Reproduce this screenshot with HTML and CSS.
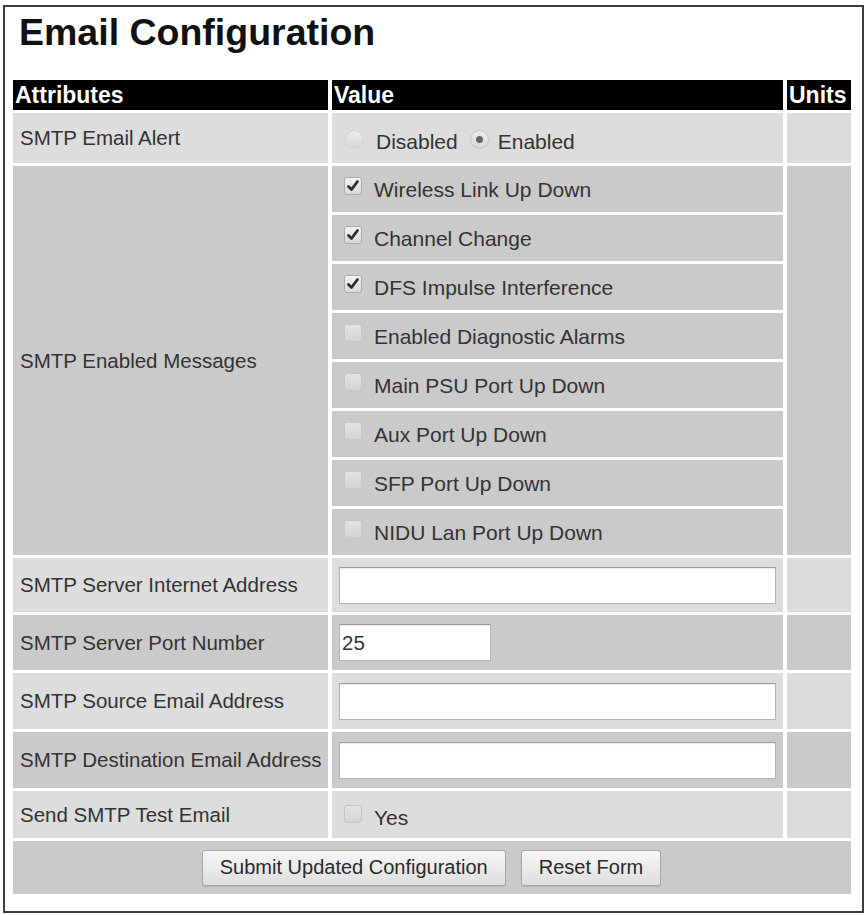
FILE: index.html
```html
<!DOCTYPE html>
<html>
<head>
<meta charset="utf-8">
<title>Email Configuration</title>
<link rel="stylesheet" href="styles.css">
</head>
<body>
<div class="frame">
  <h1 class="title">Email Configuration</h1>
  <table class="config">
    <colgroup><col class="c-attr"><col class="c-val"><col class="c-unit"></colgroup>
    <thead>
      <tr class="head"><th>Attributes</th><th>Value</th><th>Units</th></tr>
    </thead>
    <tbody>
      <tr class="light r-alert">
        <td class="attr">SMTP Email Alert</td>
        <td class="val">
          <div class="opts">
            <span class="rb"></span><span class="lbl">Disabled</span>
            <span class="rb on"></span><span class="lbl">Enabled</span>
          </div>
        </td>
        <td class="unit"></td>
      </tr>
      <tr class="dark sub">
        <td class="attr" rowspan="8">SMTP Enabled Messages</td>
        <td class="val"><div class="chk"><span class="cb on"><svg viewBox="0 0 16 16"><path d="M3.5 8.5 L6.5 11.5 L12.5 3.5"/></svg></span><span class="lbl">Wireless Link Up Down</span></div></td>
        <td class="unit" rowspan="8"></td>
      </tr>
      <tr class="dark sub"><td class="val"><div class="chk"><span class="cb on"><svg viewBox="0 0 16 16"><path d="M3.5 8.5 L6.5 11.5 L12.5 3.5"/></svg></span><span class="lbl">Channel Change</span></div></td></tr>
      <tr class="dark sub"><td class="val"><div class="chk"><span class="cb on"><svg viewBox="0 0 16 16"><path d="M3.5 8.5 L6.5 11.5 L12.5 3.5"/></svg></span><span class="lbl">DFS Impulse Interference</span></div></td></tr>
      <tr class="dark sub"><td class="val"><div class="chk"><span class="cb"></span><span class="lbl">Enabled Diagnostic Alarms</span></div></td></tr>
      <tr class="dark sub"><td class="val"><div class="chk"><span class="cb"></span><span class="lbl">Main PSU Port Up Down</span></div></td></tr>
      <tr class="dark sub"><td class="val"><div class="chk"><span class="cb"></span><span class="lbl">Aux Port Up Down</span></div></td></tr>
      <tr class="dark sub"><td class="val"><div class="chk"><span class="cb"></span><span class="lbl">SFP Port Up Down</span></div></td></tr>
      <tr class="dark sub"><td class="val"><div class="chk"><span class="cb"></span><span class="lbl">NIDU Lan Port Up Down</span></div></td></tr>
      <tr class="light r-addr">
        <td class="attr">SMTP Server Internet Address</td>
        <td class="val"><input class="field wide" type="text" value=""></td>
        <td class="unit"></td>
      </tr>
      <tr class="dark r-port">
        <td class="attr">SMTP Server Port Number</td>
        <td class="val"><input class="field short" type="text" value="25"></td>
        <td class="unit"></td>
      </tr>
      <tr class="light r-src">
        <td class="attr">SMTP Source Email Address</td>
        <td class="val"><input class="field wide" type="text" value=""></td>
        <td class="unit"></td>
      </tr>
      <tr class="dark r-dst">
        <td class="attr">SMTP Destination Email Address</td>
        <td class="val"><input class="field wide" type="text" value=""></td>
        <td class="unit"></td>
      </tr>
      <tr class="light r-test">
        <td class="attr">Send SMTP Test Email</td>
        <td class="val"><div class="chk test"><span class="cb"></span><span class="lbl">Yes</span></div></td>
        <td class="unit"></td>
      </tr>
      <tr class="dark r-btn">
        <td class="btns" colspan="3">
          <div class="btnrow">
            <button class="btn" type="button">Submit Updated Configuration</button>
            <button class="btn" type="button">Reset Form</button>
          </div>
        </td>
      </tr>
    </tbody>
  </table>
</div>
</body>
</html>
```
FILE: styles.css
```css
html, body {
  margin: 0;
  padding: 0;
  background: #ffffff;
}
body {
  font-family: "Liberation Sans", Arial, sans-serif;
  color: #333333;
}
.frame {
  margin: 5px 3px 0 3px;
  box-sizing: border-box;
  width: 861px;
  height: 908px;
  border: 2px solid #3c3c3c;
  padding: 0 0 0 4px;
}
.title {
  margin: 3px 0 23px 10px;
  font-size: 37.5px;
  line-height: 44px;
  font-weight: bold;
  color: #111111;
}
.config {
  border-collapse: separate;
  border-spacing: 4px 3px;
  table-layout: fixed;
  width: 846px;
}
.c-attr { width: 315px; }
.c-val { width: 451px; }
.c-unit { width: 64px; }
.head th {
  background: #000000;
  color: #ffffff;
  font-size: 23px;
  font-weight: bold;
  text-align: left;
  height: 30px;
  padding: 0 0 0 2px;
  line-height: 30px;
  white-space: nowrap;
  overflow: hidden;
}
td {
  padding: 0;
  font-size: 20.5px;
  line-height: 24px;
  vertical-align: middle;
}
.light td { background: #dddddd; }
.dark td { background: #cacaca; }
.attr {
  padding-left: 7px;
  white-space: nowrap;
}
.val {
  padding-left: 7px;
}
.r-alert td { height: 50px; }
.sub td.val { height: 46px; }
.r-addr td { height: 54px; }
.r-port td { height: 55px; }
.r-src td { height: 56px; }
.r-dst td { height: 56px; }
.r-test td { height: 47px; }
.r-btn td { height: 53px; }

.opts, .chk {
  display: flex;
  align-items: center;
}
.opts { padding-top: 8px; }
.chk { padding-top: 2px; }
.chk.test { padding-top: 6px; }

.rb {
  flex: none;
  width: 19px;
  height: 19px;
  border-radius: 50%;
  border: 1px solid #d2d2d2;
  background: linear-gradient(#ededed, #d8d8d8);
  margin: 0 12px 6px 6px;
  display: flex;
  align-items: center;
  justify-content: center;
  box-sizing: border-box;
}
.rb.on {
  border-color: #c4c4c4;
  margin-left: 12px;
  margin-right: 9px;
}
.rb.on::after {
  content: "";
  width: 7px;
  height: 7px;
  border-radius: 50%;
  background: #666666;
}
.lbl {
  color: #333333;
  font-size: 21px;
}

.cb {
  width: 18px;
  height: 18px;
  box-sizing: border-box;
  border: 1px solid #c6c6c6;
  border-radius: 3px;
  background: linear-gradient(#e4e4e4, #d4d4d4);
  margin: 0 12px 8px 5px;
  display: flex;
  align-items: center;
  justify-content: center;
  flex: none;
}
.cb.on {
  border-color: #ababab;
  background: linear-gradient(#f2f2f2, #d8d8d8);
}
.cb svg {
  width: 16px;
  height: 16px;
}
.cb svg path {
  fill: none;
  stroke: #2e2e2e;
  stroke-width: 2.8;
  stroke-linecap: round;
  stroke-linejoin: round;
}
.field {
  display: block;
  box-sizing: border-box;
  height: 37px;
  border: 1px solid #b4b4b4;
  border-top-color: #9c9c9c;
  background: #ffffff;
  font-family: "Liberation Sans", Arial, sans-serif;
  font-size: 20.5px;
  color: #333333;
  padding: 0 2px;
  margin: 0;
  box-shadow: inset 0 1px 1px rgba(0,0,0,0.08);
}
.field.wide { width: 437px; }
.field.short { width: 152px; }
.btnrow {
  display: flex;
  justify-content: center;
  gap: 15px;
  padding-right: 1px;
}
.btn {
  height: 36px;
  padding: 0 17px;
  font-family: "Liberation Sans", Arial, sans-serif;
  font-size: 20px;
  color: #2a2a2a;
  border: 1px solid #a8a8a8;
  border-radius: 3px;
  background: linear-gradient(#f7f7f7, #dedede);
  box-shadow: 0 1px 1px rgba(0,0,0,0.12);
}
```
